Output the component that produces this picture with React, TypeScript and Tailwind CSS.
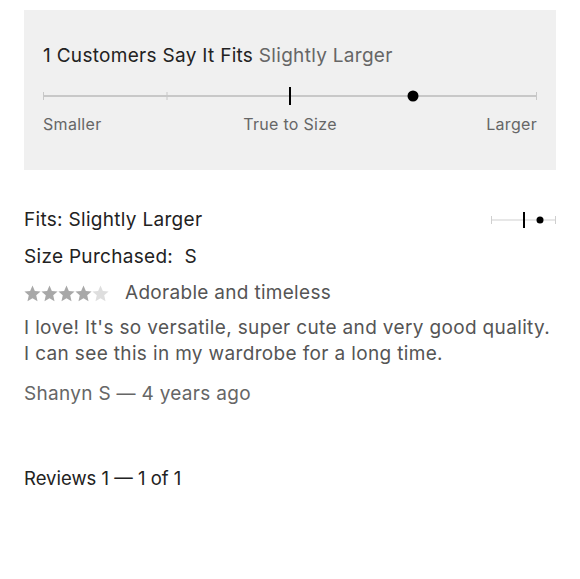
function FitScale() {
  return (
    <svg width="494" height="20" viewBox="0 0 494 20" className="block">
      <line x1="0" y1="10" x2="494" y2="10" stroke="#c8c8c8" strokeWidth="2" />
      <line x1="0.5" y1="6" x2="0.5" y2="14" stroke="#c8c8c8" strokeWidth="1" />
      <line x1="124" y1="6" x2="124" y2="14" stroke="#c8c8c8" strokeWidth="1" />
      <line x1="247" y1="1" x2="247" y2="19" stroke="#000" strokeWidth="2" />
      <circle cx="370" cy="10" r="5.5" fill="#000" />
      <line x1="493.5" y1="6" x2="493.5" y2="14" stroke="#c8c8c8" strokeWidth="1" />
    </svg>
  );
}

function MiniScale() {
  return (
    <svg width="65" height="18" viewBox="0 0 65 18" className="block">
      <line x1="0" y1="9" x2="65" y2="9" stroke="#cfcfcf" strokeWidth="1" />
      <line x1="0.5" y1="5" x2="0.5" y2="13" stroke="#cfcfcf" strokeWidth="1" />
      <line x1="33" y1="1" x2="33" y2="17" stroke="#000" strokeWidth="2" />
      <circle cx="49" cy="9" r="3.5" fill="#000" />
      <line x1="64.5" y1="5" x2="64.5" y2="13" stroke="#cfcfcf" strokeWidth="1" />
    </svg>
  );
}

function Star({ color }: { color: string }) {
  return (
    <svg width="17" height="17" viewBox="1.5 1.5 21 21" className="block">
      <path
        d="M12 2l2.9 6.9 7.1.6-5.4 4.7 1.6 7.3L12 17.8 5.8 21.5l1.6-7.3L2 9.5l7.1-.6z"
        fill={color}
      />
    </svg>
  );
}

export default function App() {
  return (
    <div className="min-h-[579px] bg-white px-6 pt-[10px] font-['Inter',sans-serif] tracking-[0.3px]">
      <section className="flex h-[160px] flex-col bg-[#f0f0f0] px-[19px] pt-[33px]">
        <h2 className="text-[19px] leading-[26px] text-[#222]">
          1 Customers Say It Fits <span className="text-[#666]">Slightly Larger</span>
        </h2>
        <div className="mt-[17px]">
          <FitScale />
        </div>
        <div className="mt-[7px] grid grid-cols-3 text-[16px] leading-[22px] text-[#666]">
          <span>Smaller</span>
          <span className="text-center">True to Size</span>
          <span className="text-right">Larger</span>
        </div>
      </section>

      <div className="mt-[37px] flex items-center justify-between">
        <p className="text-[19px] leading-[26px] text-[#222]">Fits: Slightly Larger</p>
        <MiniScale />
      </div>

      <p className="mt-[11px] text-[19px] leading-[26px] text-[#222]">Size Purchased:&nbsp; S</p>

      <div className="mt-[10px] flex h-[26px] items-center gap-[16px]">
        <div className="flex">
          <Star color="#a8a8a8" />
          <Star color="#a8a8a8" />
          <Star color="#a8a8a8" />
          <Star color="#a8a8a8" />
          <Star color="#dedede" />
        </div>
        <span className="text-[19px] leading-[26px] text-[#555]">Adorable and timeless</span>
      </div>

      <p className="mt-[9px] text-[19px] leading-[26px] tracking-[0.35px] text-[#555]">
        I love! It's so versatile, super cute and very good quality. I can see this in my wardrobe for a long time.
      </p>

      <p className="mt-[14px] text-[19px] leading-[26px] text-[#666]">Shanyn S — 4 years ago</p>

      <p className="mt-[58px] text-[18.5px] leading-[26px] tracking-normal text-[#222]">Reviews 1 — 1 of 1</p>
    </div>
  );
}
